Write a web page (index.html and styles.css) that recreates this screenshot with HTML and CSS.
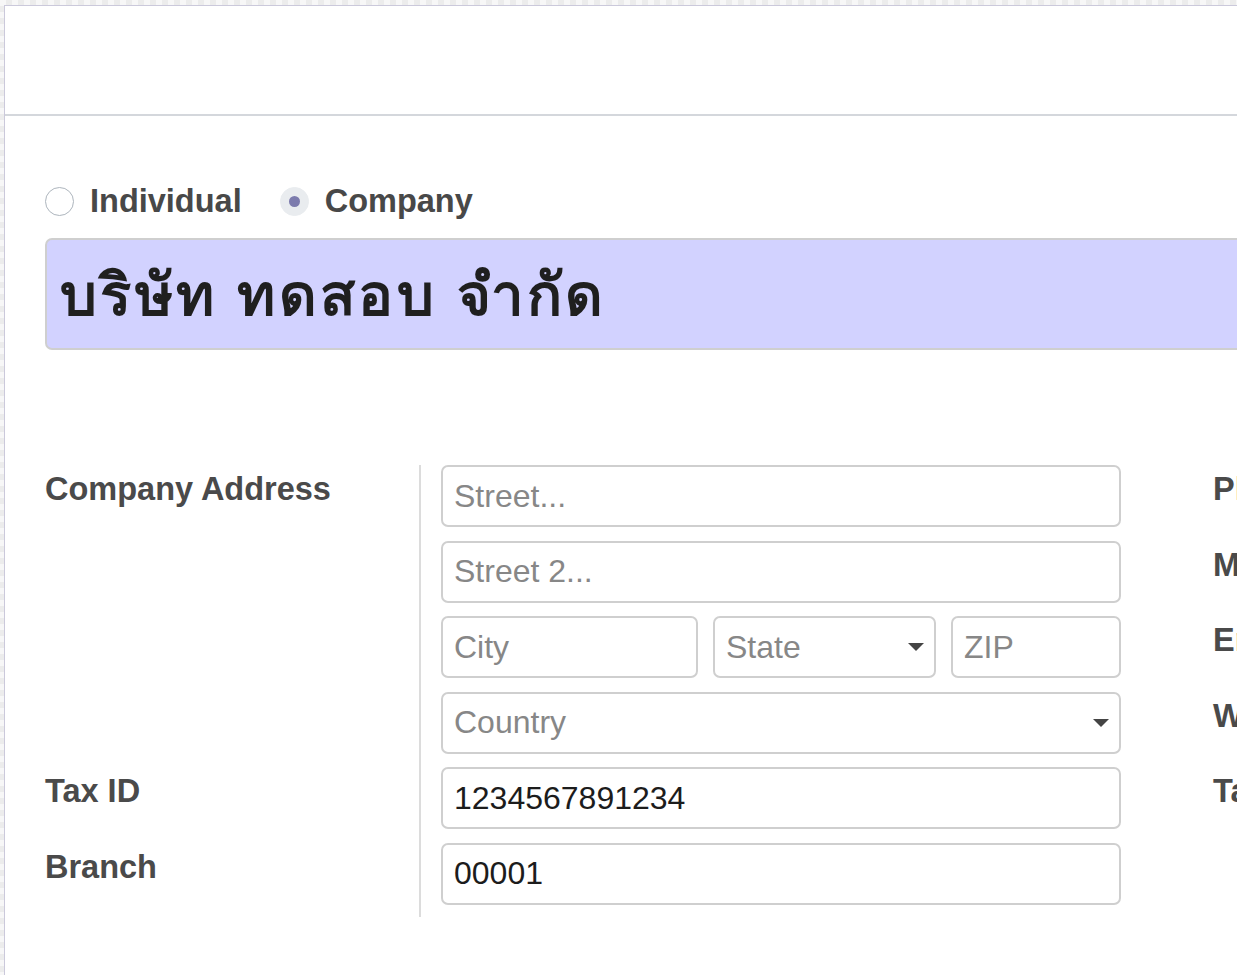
FILE: index.html
```html
<!DOCTYPE html>
<html lang="th">
<head>
    <meta charset="UTF-8">
    <title>Partner</title>
    <link rel="stylesheet" href="styles.css">
</head>
<body>

    <div class="sheet">
        <div class="sheet-top"></div>

        <div class="sheet-body">

            <div class="kind">
                <label class="kind-option">
                    <span class="radio"></span>
                    <span>Individual</span>
                </label>
                <label class="kind-option">
                    <span class="radio radio-on"></span>
                    <span>Company</span>
                </label>
            </div>

            <div class="name-box">
                <input class="name-input" type="text" value="บริษัท ทดสอบ จำกัด">
            </div>

            <div class="groups">

                <div class="group-left">
                    <div class="lbl">Company Address</div>
                    <div class="cell">
                        <div class="address">
                            <input class="field" type="text" placeholder="Street...">
                            <input class="field" type="text" placeholder="Street 2...">
                            <div class="addr-row">
                                <input class="field city" type="text" placeholder="City">
                                <div class="field select state">
                                    <input class="select-input" type="text" placeholder="State">
                                    <span class="caret"></span>
                                </div>
                                <input class="field zip" type="text" placeholder="ZIP">
                            </div>
                            <div class="field select">
                                <input class="select-input" type="text" placeholder="Country">
                                <span class="caret"></span>
                            </div>
                        </div>
                    </div>

                    <div class="lbl">Tax ID</div>
                    <div class="cell">
                        <input class="field value" type="text" value="1234567891234">
                    </div>

                    <div class="lbl">Branch</div>
                    <div class="cell cell-last">
                        <input class="field value" type="text" value="00001">
                    </div>
                </div>

                <div class="group-right">
                    <div class="lbl">Phone</div>
                    <div class="lbl">Mobile</div>
                    <div class="lbl">Email</div>
                    <div class="lbl">Website</div>
                    <div class="lbl">Tags</div>
                </div>

            </div>

        </div>
    </div>

</body>
</html>
```

FILE: styles.css
```css
html, body {
    margin: 0;
    height: 100%;
    overflow: hidden;
}

body {
    background-color: #f1f1f1;
    background-image: repeating-conic-gradient(#ececec 0 25%, #f7f7f7 0 50%);
    background-size: 12px 12px;
    font-family: "Liberation Sans", Arial, sans-serif;
    color: #4a4a4a;
}

.sheet {
    margin: 5px 0 0 4px;
    width: 1800px;
    min-height: 1000px;
    background: #ffffff;
    border-top: 1px solid #cbc9db;
    border-left: 1px solid #cbc9db;
}

.sheet-top {
    height: 108px;
    border-bottom: 2px solid #d4d7dc;
}

.sheet-body {
    padding: 70px 0 0 40px;
}

/* company / individual */

.kind {
    display: flex;
    align-items: center;
    height: 30px;
    font-size: 32.5px;
    font-weight: bold;
    color: #484848;
}

.kind-option {
    display: flex;
    align-items: center;
    gap: 16px;
    margin-right: 38px;
}

.radio {
    width: 27px;
    height: 27px;
    border: 1.5px solid #adb5bd;
    border-radius: 50%;
    display: flex;
    align-items: center;
    justify-content: center;
}

.radio-on {
    border-color: #e9ecef;
    background: #e9ecef;
}

.radio-on::after {
    content: "";
    width: 11px;
    height: 11px;
    border-radius: 50%;
    background: #7c7bad;
}

/* name */

.name-box {
    margin-top: 22px;
    height: 108px;
    background: #d2d2ff;
    border: 2px solid #cfcfcf;
    border-radius: 7px;
    display: flex;
    align-items: center;
}

.name-input {
    flex: 1;
    border: none;
    background: transparent;
    outline: none;
    padding: 0 0 0 13px;
    font-family: "Liberation Sans", "Noto Sans", sans-serif;
    font-size: 58px;
    font-weight: bold;
    letter-spacing: 3.4px;
    color: #1f1f1f;
}

/* form groups */

.groups {
    display: flex;
    gap: 92px;
    margin-top: 115px;
}

.group-left {
    display: grid;
    grid-template-columns: 374px 702px;
}

.lbl {
    font-size: 32.5px;
    font-weight: bold;
    line-height: 48px;
    color: #4a4a4a;
    white-space: nowrap;
}

.cell {
    border-left: 2px solid #dcdcdc;
    padding: 0 0 13.6px 20px;
}

.cell-last {
    padding-bottom: 12px;
}

.address {
    display: flex;
    flex-direction: column;
    gap: 13.6px;
}

.addr-row {
    display: flex;
    gap: 15px;
}

.field {
    box-sizing: border-box;
    display: block;
    width: 680px;
    height: 62px;
    border: 2px solid #cfcfcf;
    border-radius: 7px;
    padding: 0 11px;
    background: #ffffff;
    font-family: "Liberation Sans", Arial, sans-serif;
    font-size: 32px;
    color: #222222;
    outline: none;
}

.field::placeholder,
.select-input::placeholder {
    color: #878787;
}

.city {
    width: 257px;
}

.state {
    width: 223px;
}

.zip {
    width: 170px;
}

.select {
    display: flex;
    align-items: center;
    padding-right: 10px;
}

.select-input {
    flex: 1;
    min-width: 0;
    border: none;
    outline: none;
    background: transparent;
    padding: 0;
    font-family: "Liberation Sans", Arial, sans-serif;
    font-size: 32px;
    color: #222222;
}

.caret {
    width: 0;
    height: 0;
    border-left: 8px solid transparent;
    border-right: 8px solid transparent;
    border-top: 8px solid #444444;
}

.value {
    color: #1c1c1c;
}

.group-right {
    display: grid;
    grid-auto-rows: 75.6px;
}
```
